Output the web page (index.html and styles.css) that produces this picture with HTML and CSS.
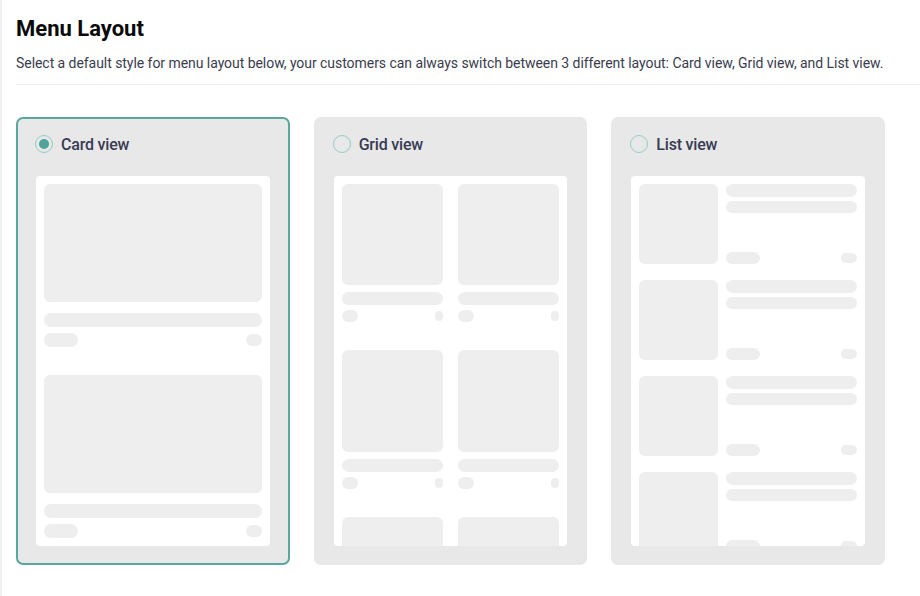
FILE: index.html
```html
<!DOCTYPE html>
<html lang="en">
<head>
<meta charset="utf-8">
<title>Menu Layout</title>
<link rel="stylesheet" href="styles.css">
</head>
<body>
<div class="page">
  <h1 class="title">Menu Layout</h1>
  <p class="desc">Select a default style for menu layout below, your customers can always switch between 3 different layout: Card view, Grid view, and List view.</p>
  <div class="divider"></div>
  <div class="options">
    <div class="option selected">
      <div class="option-head"><span class="radio"></span><span class="option-label">Card view</span></div>
      <div class="panel card-panel">
        <div class="c-item">
          <div class="sk c-img"></div>
          <div class="sk c-bar"></div>
          <div class="pills"><span class="sk pill-l"></span><span class="sk pill-r"></span></div>
        </div>
        <div class="c-item">
          <div class="sk c-img"></div>
          <div class="sk c-bar"></div>
          <div class="pills"><span class="sk pill-l"></span><span class="sk pill-r"></span></div>
        </div>
      </div>
    </div>
    <div class="option">
      <div class="option-head"><span class="radio"></span><span class="option-label">Grid view</span></div>
      <div class="panel grid-panel">
        <div class="g-item"><div class="sk g-img"></div><div class="sk g-bar"></div><div class="pills g-pills"><span class="sk gpill-l"></span><span class="sk gpill-r"></span></div></div>
        <div class="g-item"><div class="sk g-img"></div><div class="sk g-bar"></div><div class="pills g-pills"><span class="sk gpill-l"></span><span class="sk gpill-r"></span></div></div>
        <div class="g-item"><div class="sk g-img"></div><div class="sk g-bar"></div><div class="pills g-pills"><span class="sk gpill-l"></span><span class="sk gpill-r"></span></div></div>
        <div class="g-item"><div class="sk g-img"></div><div class="sk g-bar"></div><div class="pills g-pills"><span class="sk gpill-l"></span><span class="sk gpill-r"></span></div></div>
        <div class="g-item"><div class="sk g-img"></div><div class="sk g-bar"></div><div class="pills g-pills"><span class="sk gpill-l"></span><span class="sk gpill-r"></span></div></div>
        <div class="g-item"><div class="sk g-img"></div><div class="sk g-bar"></div><div class="pills g-pills"><span class="sk gpill-l"></span><span class="sk gpill-r"></span></div></div>
      </div>
    </div>
    <div class="option">
      <div class="option-head"><span class="radio"></span><span class="option-label">List view</span></div>
      <div class="panel list-panel">
        <div class="l-item"><div class="sk l-img"></div><div class="l-body"><div class="sk l-bar"></div><div class="sk l-bar"></div><div class="pills l-pills"><span class="sk lpill-l"></span><span class="sk lpill-r"></span></div></div></div>
        <div class="l-item"><div class="sk l-img"></div><div class="l-body"><div class="sk l-bar"></div><div class="sk l-bar"></div><div class="pills l-pills"><span class="sk lpill-l"></span><span class="sk lpill-r"></span></div></div></div>
        <div class="l-item"><div class="sk l-img"></div><div class="l-body"><div class="sk l-bar"></div><div class="sk l-bar"></div><div class="pills l-pills"><span class="sk lpill-l"></span><span class="sk lpill-r"></span></div></div></div>
        <div class="l-item"><div class="sk l-img"></div><div class="l-body"><div class="sk l-bar"></div><div class="sk l-bar"></div><div class="pills l-pills"><span class="sk lpill-l"></span><span class="sk lpill-r"></span></div></div></div>
      </div>
    </div>
  </div>
</div>
</body>
</html>
```

FILE: styles.css
```css
* { box-sizing: border-box; }
html, body { margin: 0; padding: 0; background: #ffffff; }
body { font-family: Roboto, "Liberation Sans", Arial, sans-serif; }

.page {
  height: 596px;
  border-left: 2px solid #f0f0f0;
  padding: 15px 0 0 14px;
  overflow: hidden;
}

.title {
  margin: 0;
  font-size: 22px;
  line-height: 28px;
  font-weight: 700;
  color: #0a0a0a;
}

.desc {
  margin: 10px 0 0;
  font-size: 14px;
  line-height: 20px;
  color: #3a3c4e;
  white-space: nowrap;
  letter-spacing: -0.05px;
}

.divider {
  margin-top: 11px;
  height: 1px;
  background: #ececf1;
}

.options {
  margin-top: 32px;
  width: 869px;
  display: grid;
  grid-template-columns: repeat(3, 1fr);
  column-gap: 24px;
}

.option {
  background: #e8e8e8;
  border: 2px solid #e8e8e8;
  border-radius: 7px;
  padding: 14px 18px 17px;
}
.option.selected { border-color: #5ba69e; }

.option-head {
  height: 22px;
  display: flex;
  align-items: center;
  gap: 8px;
  margin-left: -1px;
  margin-bottom: 21px;
}

.radio {
  width: 18px;
  height: 18px;
  border-radius: 50%;
  border: 1px solid #94cdc6;
  display: flex;
  align-items: center;
  justify-content: center;
  flex: none;
}
.selected .radio::after {
  content: "";
  width: 10px;
  height: 10px;
  border-radius: 50%;
  background: #4ea39a;
}

.option-label {
  font-size: 16px;
  font-weight: 500;
  color: #373b53;
  letter-spacing: -0.2px;
}

.panel {
  background: #ffffff;
  border-radius: 4px;
  height: 370px;
  padding: 8px;
  overflow: hidden;
}

.sk { background: #eeeeee; display: block; }

.pills { display: flex; justify-content: space-between; align-items: center; }

/* card view */
.c-item { margin-bottom: 28px; }
.c-img { height: 118px; border-radius: 6px; }
.c-bar { height: 14px; border-radius: 7px; margin-top: 11px; }
.c-item .pills { margin-top: 6px; }
.pill-l { width: 34px; height: 14px; border-radius: 7px; }
.pill-r { width: 16px; height: 12px; border-radius: 6px; }

/* grid view */
.grid-panel {
  display: grid;
  grid-template-columns: 1fr 1fr;
  column-gap: 15px;
  row-gap: 28px;
  align-content: start;
}
.g-img { aspect-ratio: 1 / 1; border-radius: 6px; }
.g-bar { height: 13px; border-radius: 7px; margin-top: 7px; }
.g-pills { margin-top: 5px; }
.gpill-l { width: 16px; height: 12px; border-radius: 6px; }
.gpill-r { width: 8px; height: 10px; border-radius: 4px; }

/* list view */
.list-panel { display: flex; flex-direction: column; gap: 16px; }
.l-item { display: flex; gap: 8px; height: 80px; flex: none; }
.l-img { width: 79px; height: 80px; border-radius: 6px; flex: none; }
.l-body { flex: 1; display: flex; flex-direction: column; gap: 4px; }
.l-bar { height: 12.5px; border-radius: 7px; }
.l-pills { margin-top: auto; }
.lpill-l { width: 34px; height: 12px; border-radius: 6px; }
.lpill-r { width: 16px; height: 10px; border-radius: 5px; }
```
